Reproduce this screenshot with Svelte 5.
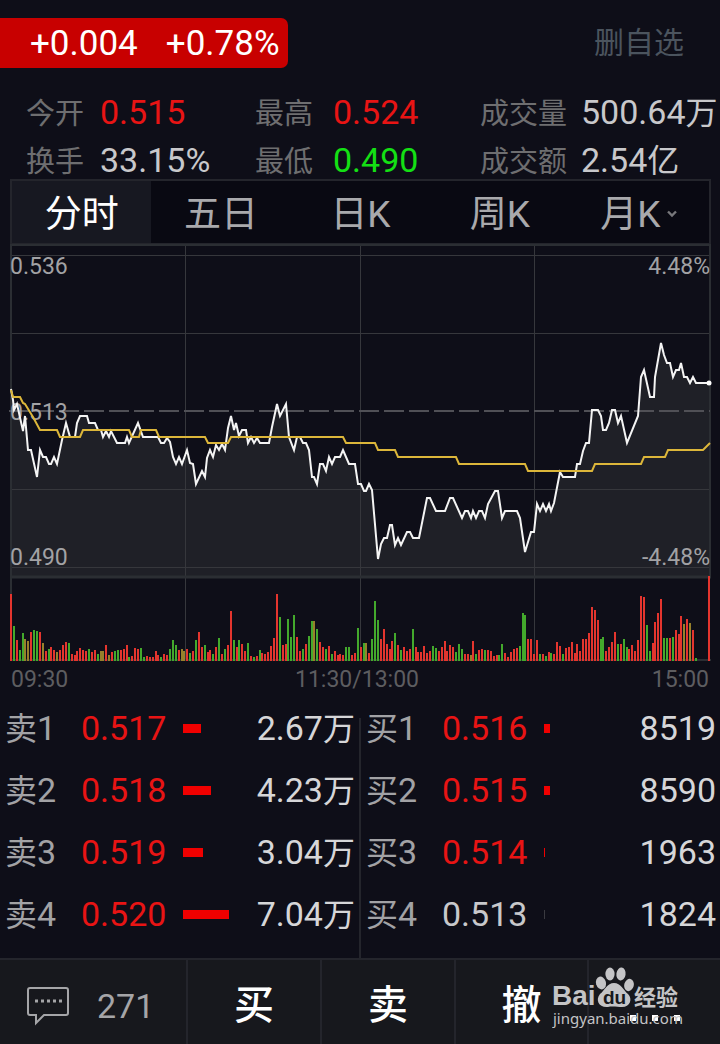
<script lang="ts">
  type Level = { name: string; price: string; volume: string; unit?: string; bar: number; tone: string };

  const stats = [
    { label: '今开', value: '0.515', tone: 'up' },
    { label: '最高', value: '0.524', tone: 'up' },
    { label: '成交量', value: '500.64', unit: '万', tone: 'flat' },
    { label: '换手', value: '33.15%', tone: 'flat' },
    { label: '最低', value: '0.490', tone: 'down' },
    { label: '成交额', value: '2.54', unit: '亿', tone: 'flat' },
  ];

  const tabs = ['分时', '五日', '日K', '周K', '月K'];
  let active = $state('分时');

  const asks: Level[] = [
    { name: '卖1', price: '0.517', volume: '2.67', unit: '万', bar: 18, tone: 'up' },
    { name: '卖2', price: '0.518', volume: '4.23', unit: '万', bar: 28, tone: 'up' },
    { name: '卖3', price: '0.519', volume: '3.04', unit: '万', bar: 20, tone: 'up' },
    { name: '卖4', price: '0.520', volume: '7.04', unit: '万', bar: 46, tone: 'up' },
  ];
  const bids: Level[] = [
    { name: '买1', price: '0.516', volume: '8519', bar: 6, tone: 'up' },
    { name: '买2', price: '0.515', volume: '8590', bar: 6, tone: 'up' },
    { name: '买3', price: '0.514', volume: '1963', bar: 1, tone: 'up' },
    { name: '买4', price: '0.513', volume: '1824', bar: 1, tone: 'flat' },
  ];

  // Chart geometry, in viewBox units.
  const priceBottom = 332;
  const volumeBase = 417;

  const price =
    '11,145 13,156 14,166 17,160 19,169 23,187 25,172 28,206 31,206 37,233 40,206 43,213 46,213 49,220 51,220 54,213 57,220 62,196 66,179 70,193 75,193 77,179 80,172 87,172 89,179 95,179 98,186 101,186 103,193 106,187 109,193 111,187 117,199 125,199 127,193 129,199 138,179 143,193 158,193 161,199 164,199 167,194 170,198 173,213 176,220 179,213 182,220 187,206 190,219 193,220 196,240 202,227 205,233 207,214 210,206 213,213 216,201 219,206 222,200 225,206 228,184 231,172 234,186 236,179 239,192 242,186 246,186 248,199 251,193 254,199 257,194 260,199 269,199 272,183 277,160 280,172 286,160 289,193 294,206 297,193 300,193 303,199 306,199 309,206 312,233 314,233 317,240 320,220 323,220 326,227 329,213 332,220 335,213 340,213 343,206 346,213 349,220 355,220 358,240 361,240 364,247 366,247 369,240 372,246 378,315 381,300 384,294 387,294 390,281 392,281 395,301 398,294 401,301 407,288 410,288 413,294 419,294 427,254 430,254 436,267 445,267 450,254 453,254 462,274 465,267 468,267 471,274 473,267 476,274 479,267 482,267 485,274 488,260 495,247 498,247 502,274 505,267 517,267 520,274 525,308 531,288 534,288 537,260 540,267 543,260 546,267 549,260 551,267 554,259 560,228 563,233 575,233 577,220 580,220 583,207 586,199 589,199 592,166 598,166 601,172 603,186 606,186 609,179 612,166 615,166 618,179 621,172 627,199 638,172 641,133 644,126 650,153 654,153 655,133 661,99 664,111 667,119 670,119 673,133 676,126 679,126 681,119 684,133 687,133 690,139 693,133 696,139 709,139';
  const average =
    '11,146 13,153 20,153 23,159 25,160 33,173 40,186 57,186 60,193 80,193 83,186 129,186 132,193 139,193 141,186 156,186 159,193 205,193 208,199 228,199 231,193 343,193 346,199 375,199 378,206 395,206 398,213 456,213 459,220 525,220 528,227 592,227 595,220 641,220 644,213 665,213 668,206 703,206 710,199';

  // x, height and colour: r = up, g = down, o = mixed
  const volumes =
    '11,67r 14,35g 17,21r 20,11g 23,28g 25,22o 28,20o 31,29r 34,31g 37,30g 40,29r 43,18o 46,10r 49,12g 51,14r 54,11r 57,9o 60,11r 63,16r 66,19r 69,18g 72,7r 75,6r 77,10r 80,13r 83,11r 86,10r 89,12g 92,9r 95,11r 98,7g 101,10o 103,10o 106,16r 109,6o 112,9r 115,10g 118,11g 121,11r 124,12r 127,16r 129,4g 132,5r 135,13r 138,12r 141,13g 144,4g 147,5r 150,4r 153,4r 156,10r 158,6r 161,4g 164,7r 167,6r 170,12g 173,21g 176,16g 179,11r 182,12o 184,10o 187,12r 190,8g 193,10r 196,21g 199,29r 202,14r 205,16g 208,9r 210,11r 213,7g 216,14r 219,23g 222,7r 225,12g 228,16r 231,50r 234,21g 237,14r 239,21g 242,17r 245,10r 248,18g 251,5r 254,4g 257,5r 260,11g 262,8r 265,7r 268,9r 271,15r 274,23r 277,67r 280,44g 283,16r 286,17r 288,42g 291,24g 294,46g 297,24r 300,10r 303,12g 306,17r 309,25g 312,40g 314,40o 317,32g 320,19r 323,14r 326,12g 329,15r 332,7g 335,10r 338,6r 340,7r 343,6r 346,14g 349,14g 352,6r 355,8r 358,33g 361,14r 364,18g 366,18o 369,8r 372,22g 375,60g 378,41g 381,22r 384,32r 387,17r 390,12r 392,20r 395,28g 398,16r 401,11g 404,14r 407,10r 410,12r 413,32g 416,14r 418,9r 421,9r 424,15r 427,8r 430,10r 433,15g 436,13g 439,10r 442,14r 445,20r 447,10r 450,16r 453,14r 456,9g 459,17g 462,12g 465,7r 468,7r 471,6o 473,20r 476,7g 479,11r 482,12r 485,11g 488,11r 491,10r 494,5r 497,6r 499,6g 502,17g 505,8r 508,4r 511,9r 514,12r 517,13r 520,15g 523,48g 525,46g 528,22r 531,22r 534,7r 537,21r 540,7g 543,7r 546,5g 549,9r 551,8g 554,7r 557,19r 560,15r 563,7g 566,13r 569,14r 572,19r 575,8r 577,17r 580,10r 583,22r 586,22r 589,28r 592,54r 595,51r 598,41r 601,22g 603,24g 606,10r 609,14r 612,19r 615,29r 618,17g 621,17r 624,22g 627,14g 629,12r 632,16r 635,10r 638,21r 641,65r 644,64r 647,36g 650,10g 653,18r 655,39r 658,48r 661,62r 664,23g 667,23g 670,23r 673,24g 676,31r 679,27r 681,45r 684,37o 687,42r 690,38o 693,31r 696,3g 709,85r';
  const colors: Record<string, string> = { r: '#e4352e', g: '#43a92c', o: '#96802b' };

  const bars = volumes.split(' ').map((item) => {
    const [x, rest] = item.split(',');
    return { x: Number(x), h: parseInt(rest), color: colors[rest.slice(-1)] };
  });
</script>

{#snippet levels(rows: Level[], caption: string)}
  <table aria-label={caption}>
    <tbody>
      {#each rows as row}
        <tr>
          <th scope="row"><span class="han">{row.name[0]}</span>{row.name[1]}</th>
          <td class="price {row.tone}">{row.price}</td>
          <td class="depth"><div class="bar {row.tone}" style:width="{row.bar}px"></div></td>
          <td class="volume">{row.volume}{#if row.unit}<span class="han">{row.unit}</span>{/if}</td>
        </tr>
      {/each}
    </tbody>
  </table>
{/snippet}

<main>
  <header>
    <div class="change"><span>+0.004</span><span>+0.78%</span></div>
    <button class="unwatch">删自选</button>
  </header>

  <dl class="stats">
    {#each stats as s}
      <div class="stat">
        <dt>{s.label}</dt>
        <dd class={s.tone}>{s.value}{#if s.unit}<span class="han">{s.unit}</span>{/if}</dd>
      </div>
    {/each}
  </dl>

  <nav class="tabs">
    {#each tabs as tab}
      <button class:active={active === tab} onclick={() => (active = tab)}>
        {tab}
        {#if tab === '月K'}
          <svg width="12" height="14" viewBox="0 0 12 14" aria-hidden="true">
            <path d="M2 7.5 6 11.5 10 7.5" fill="none" stroke="#77777b" stroke-width="2.4" />
          </svg>
        {/if}
      </button>
    {/each}
  </nav>

  <svg class="chart" viewBox="0 0 720 453" role="img" aria-label="分时走势">
    <polygon points="11,{priceBottom} {price} 709,{priceBottom}" fill="#1f2027" />
    <g stroke="#36373c" stroke-width="1">
      {#each [11.5, 89.5, 245.5, 323.5] as y}
        <line x1="11" x2="710" y1={y} y2={y} />
      {/each}
      {#each [185.5, 360.5, 534.5] as x}
        <line x1={x} x2={x} y1="1" y2={volumeBase} />
      {/each}
    </g>
    <g stroke="#2b2e33" stroke-width="2">
      <line x1="10" x2="711" y1="1" y2="1" />
      <line x1="11" x2="11" y1="0" y2={volumeBase} />
      <line x1="710" x2="710" y1="0" y2={priceBottom} />
      <line x1="10" x2="711" y1="333" y2="333" stroke-width="3" />
      <line x1="10" x2="711" y1="416" y2="416" />
    </g>
    <line x1="9" x2="710" y1="167" y2="167" stroke="#505056" stroke-width="2" stroke-dasharray="20 5" />

    <g class="scale">
      <text x="10" y="30">0.536</text>
      <text x="10" y="176">0.513</text>
      <text x="10" y="321">0.490</text>
      <text x="710" y="30" text-anchor="end">4.48%</text>
      <text x="710" y="321" text-anchor="end">-4.48%</text>
    </g>

    <polyline points={price} fill="none" stroke="#f4f4f4" stroke-width="2" />
    <polyline points={average} fill="none" stroke="#dcb63a" stroke-width="2" />
    <circle cx="709" cy="139" r="2.5" fill="#fff" />

    {#each bars as b}
      <rect x={b.x - 1} y={volumeBase - b.h} width="2" height={b.h} fill={b.color} />
    {/each}

    <g class="time">
      <text x="11" y="443">09:30</text>
      <text x="357" y="443" text-anchor="middle">11:30/13:00</text>
      <text x="709" y="443" text-anchor="end">15:00</text>
    </g>
  </svg>

  <section class="book">
    {@render levels(asks, '卖盘')}
    <div class="divider"></div>
    {@render levels(bids, '买盘')}
  </section>

  <footer>
    <button class="comments">
      <svg width="42" height="40" viewBox="0 0 42 40" aria-hidden="true">
        <path
          d="M3 2H39Q41 2 41 4V27Q41 29 39 29H17L9 37V29H3Q1 29 1 27V4Q1 2 3 2Z"
          fill="none"
          stroke="#a5a5a8"
          stroke-width="2"
        />
        <path d="M8 15h3M14 15h3M20 15h3M26 15h3M32 15h3" stroke="#a5a5a8" stroke-width="3" />
      </svg>
      271
    </button>
    <button>买</button>
    <button>卖</button>
    <button>撤</button>
    <button class="more" aria-label="更多"><i></i><i></i><i></i></button>

    <svg class="mark" width="132" height="64" viewBox="0 0 132 64" aria-hidden="true">
      <g fill="#c4c4c6">
        <text class="latin" x="0" y="39" font-size="28">Bai</text>
        <ellipse cx="49" cy="17" rx="5" ry="6.5" transform="rotate(-15 49 17)" />
        <ellipse cx="58" cy="8" rx="4.6" ry="6.5" />
        <ellipse cx="69" cy="8" rx="4.6" ry="6.5" transform="rotate(8 69 8)" />
        <ellipse cx="77" cy="19" rx="4.8" ry="6.2" transform="rotate(15 77 19)" />
        <path d="M62 17C69 17 71 24 76 28C81 33 78 41 70 41C66 41 60 40 56 41C47 42 43 34 48 28C53 24 55 17 62 17Z" />
        <text class="cjk" x="82" y="39" font-size="22">经验</text>
        <text class="url" x="1" y="58" font-size="15">jingyan.baidu.com</text>
      </g>
      <text class="latin" x="51" y="38" font-size="19" fill="#17181d">du</text>
    </svg>
  </footer>
</main>

<style>
  :global(body) {
    margin: 0;
    background: #0e0e18;
  }
  main {
    font-family: Roboto, 'Noto Sans CJK SC', sans-serif;
    color: #c8c8cb;
    background: #0e0e18;
  }
  button {
    margin: 0;
    padding: 0;
    border: 0;
    background: none;
    color: inherit;
    font: inherit;
    cursor: pointer;
  }
  .up {
    color: #e81414;
  }
  .down {
    color: #14e014;
  }
  .flat {
    color: #c8c8cb;
  }
  .han {
    font-size: 32px;
  }

  header {
    display: flex;
    justify-content: space-between;
    align-items: center;
    padding: 18px 36px 25px 0;
  }
  .change {
    display: flex;
    gap: 28px;
    padding: 2px 8px 0 30px;
    border-radius: 0 7px 7px 0;
    background: #c80000;
    color: #fff;
    font-size: 35px;
    line-height: 48px;
  }
  .unwatch {
    color: #4b545e;
    font-size: 30px;
    line-height: 48px;
  }

  .stats {
    display: grid;
    grid-template-columns: 229fr 225fr 240fr;
    row-gap: 10px;
    margin: 0;
    padding-left: 26px;
  }
  .stat {
    display: flex;
    align-items: baseline;
    gap: 16px;
    height: 38px;
    line-height: 38px;
    white-space: nowrap;
  }
  .stat:nth-child(3n + 2) {
    gap: 20px;
  }
  .stat:nth-child(3n) {
    gap: 14px;
  }
  dt {
    color: #6e6e70;
    font-size: 29px;
  }
  dd {
    margin: 0;
    font-size: 34px;
  }

  .tabs {
    display: grid;
    grid-template-columns: repeat(5, 1fr);
    margin: 0 9px 0 10px;
    border: 2px solid #24252c;
    border-bottom-width: 1px;
    background: #090912;
  }
  .tabs button {
    display: flex;
    justify-content: center;
    align-items: center;
    gap: 6px;
    height: 62px;
    padding-bottom: 3px;
    color: #a9a9ac;
    font-size: 37px;
  }
  .tabs .active {
    background: #171821;
    color: #fff;
  }

  .chart {
    display: block;
    width: 100%;
    height: auto;
  }
  .chart text {
    font-size: 23px;
  }
  .scale {
    fill: #a2a2a5;
  }
  .time {
    fill: #5d5d60;
  }

  .book {
    display: flex;
    padding-bottom: 13px;
  }
  table {
    flex: 1;
    border-collapse: collapse;
    table-layout: fixed;
    width: 0;
    font-size: 34px;
    line-height: 40px;
  }
  .divider {
    width: 2px;
    margin: 21px 0 -13px;
    background: #24252c;
  }
  tr {
    height: 62px;
  }
  th,
  td {
    padding: 0;
    text-align: left;
    white-space: nowrap;
  }
  th {
    width: 76px;
    padding-left: 5px;
    color: #a2a2a5;
    font-weight: normal;
  }
  .price {
    width: 102px;
  }
  .depth {
    width: 48px;
  }
  .bar {
    height: 9px;
    background: #f00000;
  }
  .bar.flat {
    background: #3a3a40;
  }
  .volume {
    padding-right: 4px;
    color: #d6d6d8;
    text-align: right;
  }

  footer {
    position: relative;
    display: grid;
    grid-template-columns: 186fr 134fr 134fr 133fr 133fr;
    height: 84px;
    border-top: 2px solid #24252c;
    background: #17181d;
  }
  footer button {
    color: #fff;
    font-size: 40px;
    font-weight: 500;
  }
  footer button + button {
    border-left: 2px solid #24252c;
  }
  .comments {
    display: flex;
    align-items: center;
    gap: 28px;
    padding: 8px 0 0 27px;
    color: #a5a5a8;
    font-size: 34px;
    font-weight: normal;
  }
  .more {
    display: flex;
    justify-content: center;
    align-items: center;
    gap: 16px;
    padding-top: 32px;
  }
  .more i {
    width: 6px;
    height: 6px;
    background: #fff;
  }
  .mark {
    position: absolute;
    top: 6px;
    right: 36px;
    pointer-events: none;
  }
  .latin {
    font-family: 'Liberation Sans', sans-serif;
    font-weight: bold;
  }
  .cjk {
    font-weight: bold;
  }
  .url {
    font-family: 'Noto Sans', sans-serif;
  }
</style>
